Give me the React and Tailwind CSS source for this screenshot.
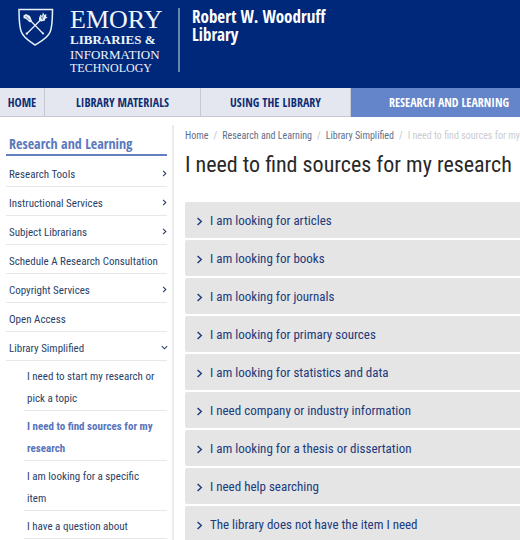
import React from "react";

const sans = "font-['Roboto_Condensed','Roboto',sans-serif]";
const boldSans = "font-['Open_Sans_Condensed','Roboto_Condensed',sans-serif]";
const serif = "font-['Liberation_Serif',serif]";

const navItems = [
  { label: "HOME" },
  { label: "LIBRARY MATERIALS" },
  { label: "USING THE LIBRARY" },
  { label: "RESEARCH AND LEARNING", active: true },
];

const sideItems = [
  { label: "Research Tools", arrow: "right" },
  { label: "Instructional Services", arrow: "right" },
  { label: "Subject Librarians", arrow: "right" },
  { label: "Schedule A Research Consultation" },
  { label: "Copyright Services", arrow: "right" },
  { label: "Open Access" },
  { label: "Library Simplified", arrow: "down" },
];

const subItems = [
  { label: "I need to start my research or pick a topic" },
  { label: "I need to find sources for my research", active: true },
  { label: "I am looking for a specific item" },
  { label: "I have a question about" },
];

const topics = [
  "I am looking for articles",
  "I am looking for books",
  "I am looking for journals",
  "I am looking for primary sources",
  "I am looking for statistics and data",
  "I need company or industry information",
  "I am looking for a thesis or dissertation",
  "I need help searching",
  "The library does not have the item I need",
];

function Chevron({ down = false, className = "" }) {
  return (
    <svg viewBox="0 0 6 8" aria-hidden="true" className={`${className} ${down ? "rotate-90" : ""}`}>
      <path d="M1.3 0.8 4.6 4 1.3 7.2" fill="none" stroke="currentColor" strokeWidth="1.3" />
    </svg>
  );
}

function Shield() {
  return (
    <svg viewBox="0 0 36 38" aria-hidden="true" className="h-[38px] w-9 shrink-0 text-[#e8eff8]">
      <path
        d="M1 1.5H34.5C34.3 8 34.7 17 32.3 23.5C30 30 22.7 33.5 17 37C12 33.5 5.5 30 3.2 23.5C.8 17 1.2 8 1 1.5Z"
        fill="none"
        stroke="currentColor"
        strokeWidth="1.5"
      />
      <path d="M9.5 9.5 25 25.5M25 9.5 8.5 26" stroke="currentColor" strokeWidth="1.3" />
      <path d="M5.5 7.5 8 6 12 8 14 13 12 14.5 8 11 5.5 10Z" fill="currentColor" />
      <path d="M21 10 22.5 6.5 24 8 25 4.5 26.5 7 28.5 6 28 8.5 29.5 9.5 27 11 27 12.5 23 13.5 21 12.5Z" fill="currentColor" />
      <path d="M7.5 8 11.5 12M23 8.5 24.5 11.5M25.5 7.5 24.5 10.5" stroke="#00287a" strokeWidth=".6" />
      <circle cx="8.7" cy="25.7" r="1.1" fill="currentColor" />
      <circle cx="25" cy="25.5" r="1.1" fill="currentColor" />
    </svg>
  );
}

export default function App() {
  return (
    <div className={`${sans} h-screen overflow-hidden bg-white text-[#2a3f68]`}>
      <header className="flex h-[88px] items-start bg-[#00287a] pt-2 pl-[18px] text-white">
        <Shield />
        <div className={`${serif} ml-4 flex w-[92px] flex-col whitespace-nowrap text-[#f0f5fb]`}>
          <span className="text-[26px] leading-6">EMORY</span>
          <span className="text-[13px] leading-[15px] font-bold">LIBRARIES &amp;</span>
          <span className="text-[13px] leading-[15px]">INFORMATION</span>
          <span className="text-[12px] leading-[13px]">TECHNOLOGY</span>
        </div>
        <div className="ml-4 h-16 w-0.5 bg-[#6488a8]" />
        <p className={`${boldSans} ml-3 text-[17px] leading-[18px] font-bold`}>
          Robert W. Woodruff
          <br />
          Library
        </p>
      </header>

      <nav className={`${boldSans} grid h-[29px] grid-cols-[45px_156px_150px_minmax(196px,1fr)] text-[12px] font-bold whitespace-nowrap`}>
        {navItems.map(({ label, active }) => (
          <a
            key={label}
            href="#"
            className={`flex items-center justify-center border-b pt-0.5 ${
              active ? "border-[#6485c9] bg-[#6485c9] text-white" : "border-r border-[#c5c9d4] bg-[#e4e7ef] text-[#0c2d75]"
            }`}
          >
            {label}
          </a>
        ))}
      </nav>

      <div className="flex pt-2">
        <aside className="w-[174px] shrink-0 border-r-2 border-[#ececec] pr-[5px] pl-1.5 text-[11px]">
          <h2 className={`${boldSans} h-[31px] border-b-2 border-[#6480c0] pt-[11px] pl-[3px] text-[14px] leading-4 font-bold text-[#5a79bd]`}>
            Research and Learning
          </h2>
          <ul className="pt-0.5">
            {sideItems.map(({ label, arrow }) => (
              <li key={label} className="border-b border-[#e8e8e8]">
                <a href="#" className="flex h-7 items-center justify-between pt-1.5 pl-[3px] whitespace-nowrap">
                  {label}
                  {arrow && <Chevron down={arrow === "down"} className="mb-1 h-[7px] w-[5px]" />}
                </a>
              </li>
            ))}
          </ul>
          <ul className="pl-[18px]">
            {subItems.map(({ label, active }) => (
              <li key={label} className="border-b border-[#e8e8e8] pt-[5px] pr-2 pl-[3px] leading-[22px]">
                <a href="#" className={active ? "font-bold text-[#5874bb]" : ""}>
                  {label}
                </a>
              </li>
            ))}
          </ul>
        </aside>

        <main className="min-w-0 flex-1 pl-[11px]">
          <div className="flex h-5 items-center gap-[5px] text-[10px] whitespace-nowrap text-[#60708c]">
            <a href="#">Home</a>
            <span className="text-[#c0c4cc]">/</span>
            <a href="#">Research and Learning</a>
            <span className="text-[#c0c4cc]">/</span>
            <a href="#">Library Simplified</a>
            <span className="text-[#c0c4cc]">/</span>
            <span className="text-[#c9ccd2]">I need to find sources for my</span>
          </div>
          <h1 className="pt-1 text-[22px] leading-8 whitespace-nowrap text-[#292929]">
            I need to find sources for my research
          </h1>
          <ul className="flex flex-col gap-0.5 pt-[21px]">
            {topics.map((topic) => (
              <li key={topic}>
                <button
                  type="button"
                  className="flex h-9 w-full items-center gap-[7px] rounded-l-xs bg-[#e5e5e5] pt-0.5 pl-[11px] text-left text-[13px] whitespace-nowrap text-[#203a7c]"
                >
                  <Chevron className="h-[9px] w-[7px]" />
                  {topic}
                </button>
              </li>
            ))}
          </ul>
        </main>
      </div>
    </div>
  );
}
